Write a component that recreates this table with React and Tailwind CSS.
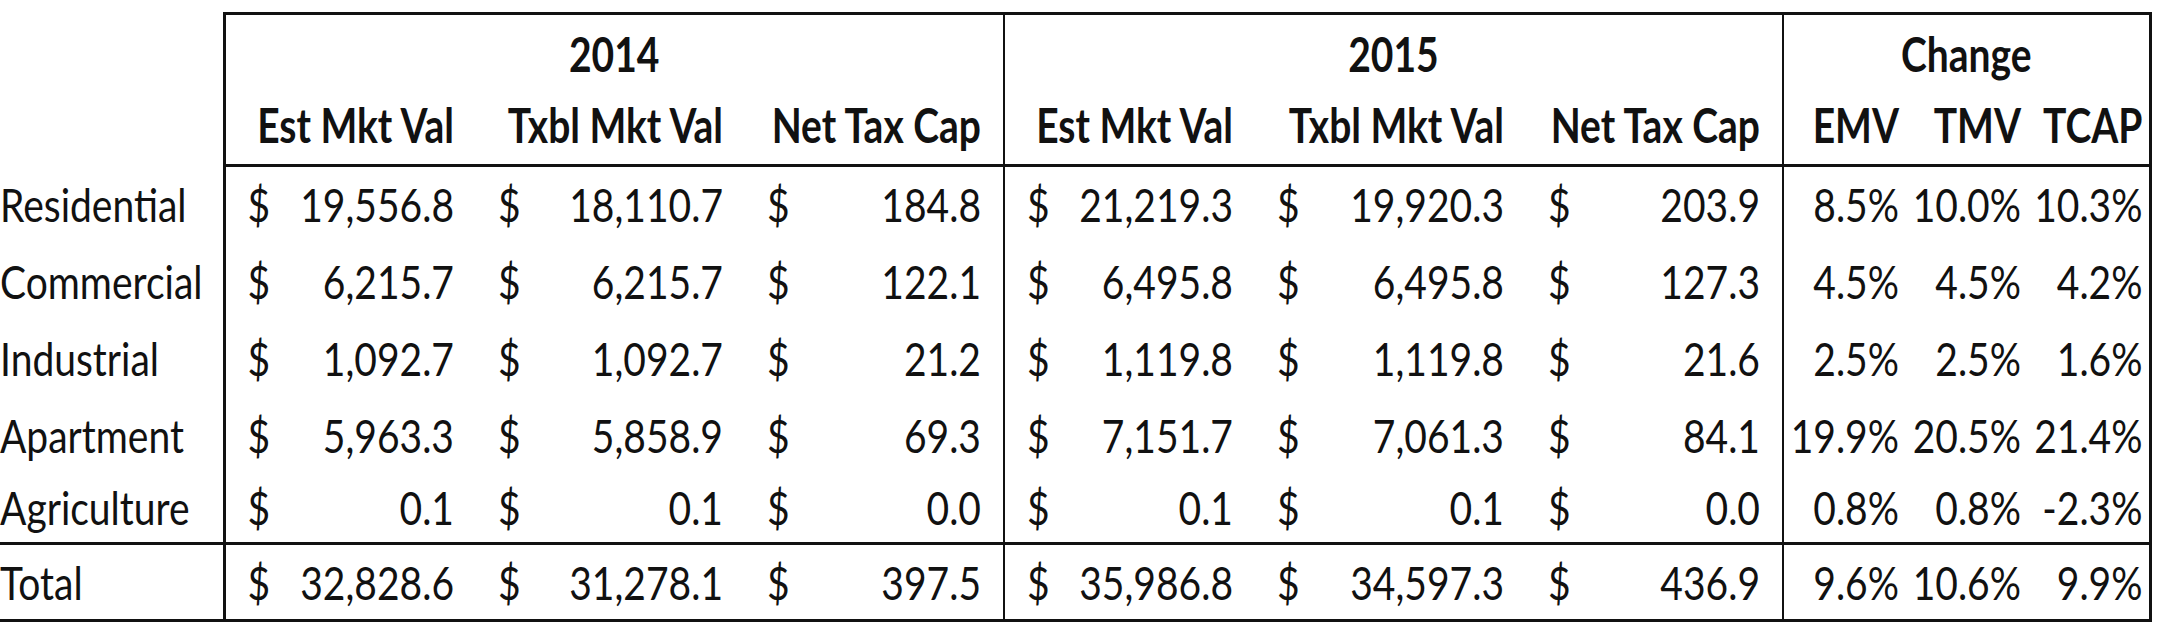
const rows = [
  { label: "Residential", v: ["19,556.8", "18,110.7", "184.8", "21,219.3", "19,920.3", "203.9"], c: ["8.5%", "10.0%", "10.3%"] },
  { label: "Commercial", v: ["6,215.7", "6,215.7", "122.1", "6,495.8", "6,495.8", "127.3"], c: ["4.5%", "4.5%", "4.2%"] },
  { label: "Industrial", v: ["1,092.7", "1,092.7", "21.2", "1,119.8", "1,119.8", "21.6"], c: ["2.5%", "2.5%", "1.6%"] },
  { label: "Apartment", v: ["5,963.3", "5,858.9", "69.3", "7,151.7", "7,061.3", "84.1"], c: ["19.9%", "20.5%", "21.4%"] },
  { label: "Agriculture", v: ["0.1", "0.1", "0.0", "0.1", "0.1", "0.0"], c: ["0.8%", "0.8%", "-2.3%"] }
];

const total = { label: "Total", v: ["32,828.6", "31,278.1", "397.5", "35,986.8", "34,597.3", "436.9"], c: ["9.6%", "10.6%", "9.9%"] };

const subHeads = ["Est Mkt Val", "Txbl Mkt Val", "Net Tax Cap", "Est Mkt Val", "Txbl Mkt Val", "Net Tax Cap"];
const changeHeads = ["EMV", "TMV", "TCAP"];

// left border per value column: first of each year group gets the heavy rule
const valueBorder = ["border-l-[3px]", "", "", "border-l-2", "", ""];

function T({ children }) {
  return <span className="inline-block scale-y-[1.2]">{children}</span>;
}

function Row({ row, isTotal }) {
  const edge = isTotal ? "border-t-[3px] border-b-[3px] border-[#111]" : "";
  return (
    <tr className={isTotal ? "h-[77px]" : row.label === "Agriculture" ? "h-[70px]" : "h-[77px]"}>
      <td className={`pl-0 text-left ${edge}`}>
        <T>{row.label}</T>
      </td>
      {row.v.map((value, i) => (
        <td key={i} className={`px-[22px] border-[#111] ${valueBorder[i]} ${edge}`}>
          <div className="flex items-center justify-between">
            <T>$</T>
            <T>{value}</T>
          </div>
        </td>
      ))}
      {row.c.map((value, i) => (
        <td
          key={i}
          className={`pr-[6px] text-right border-[#111] ${i === 0 ? "border-l-2" : ""} ${i === 2 ? "border-r-[3px]" : ""} ${edge}`}
        >
          <T>{value}</T>
        </td>
      ))}
    </tr>
  );
}

export default function App() {
  return (
    <div className="min-h-screen bg-white pt-[12px] text-[#111] [font-family:Lato,sans-serif]">
      <table className="table-fixed border-collapse text-[39px] leading-none">
        <colgroup>
          <col className="w-[224px]" />
          <col className="w-[252px]" />
          <col className="w-[269px]" />
          <col className="w-[259px]" />
          <col className="w-[251px]" />
          <col className="w-[271px]" />
          <col className="w-[257px]" />
          <col className="w-[122px]" />
          <col className="w-[122px]" />
          <col className="w-[123px]" />
        </colgroup>
        <thead className="font-bold">
          <tr className="h-[80px]">
            <th />
            <th colSpan={3} className="border-l-[3px] border-t-[3px] border-[#111] text-center font-bold">
              <T>2014</T>
            </th>
            <th colSpan={3} className="border-l-2 border-t-[3px] border-[#111] text-center font-bold">
              <T>2015</T>
            </th>
            <th colSpan={3} className="border-l-2 border-r-[3px] border-t-[3px] border-[#111] text-center font-bold">
              <T>Change</T>
            </th>
          </tr>
          <tr className="h-[72px]">
            <th />
            {subHeads.map((head, i) => (
              <th key={i} className={`border-b-[3px] border-[#111] pr-[22px] pb-[6px] text-right font-bold ${valueBorder[i]}`}>
                <T>{head}</T>
              </th>
            ))}
            {changeHeads.map((head, i) => (
              <th
                key={head}
                className={`border-b-[3px] border-[#111] pr-[6px] pb-[6px] text-right font-bold ${i === 0 ? "border-l-2" : ""} ${i === 2 ? "border-r-[3px]" : ""}`}
              >
                <T>{head}</T>
              </th>
            ))}
          </tr>
        </thead>
        <tbody>
          {rows.map((row) => (
            <Row key={row.label} row={row} />
          ))}
          <Row row={total} isTotal />
        </tbody>
      </table>
    </div>
  );
}
